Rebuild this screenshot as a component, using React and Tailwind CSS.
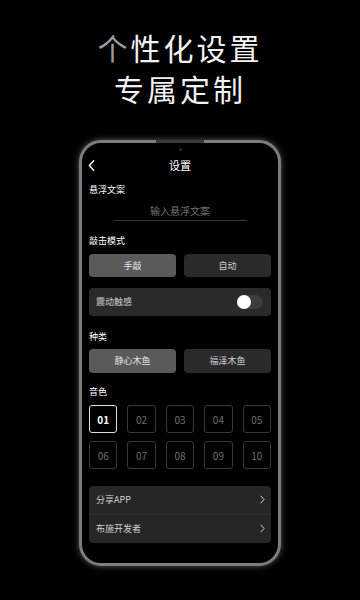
import React, { useState } from "react";

const font = { fontFamily: '"Noto Sans CJK SC", "Noto Sans", sans-serif' };

const Chevron = ({ className }) => (
  <svg viewBox="0 0 8 14" className={className} fill="none" stroke="currentColor" strokeWidth="1.6" strokeLinecap="round" strokeLinejoin="round">
    <path d="M1.5 1.5 L6.5 7 L1.5 12.5" />
  </svg>
);

const Segment = ({ options, value, onChange }) => (
  <div className="grid grid-cols-2 gap-2 h-full">
    {options.map((o) => (
      <button
        key={o}
        onClick={() => onChange(o)}
        className={`h-full rounded-[4px] text-[9px] ${value === o ? "bg-[#5a5a5a] text-[#e5e5e5]" : "bg-[#2a2a2a] text-[#cfcfcf]"}`}
      >
        {o}
      </button>
    ))}
  </div>
);

export default function App() {
  const [mode, setMode] = useState("手敲");
  const [kind, setKind] = useState("静心木鱼");
  const [tone, setTone] = useState("01");
  const [vibrate, setVibrate] = useState(false);
  const tones = ["01", "02", "03", "04", "05", "06", "07", "08", "09", "10"];

  return (
    <div className="w-[360px] h-[600px] bg-black overflow-hidden flex flex-col items-center" style={font}>
      {/* Headline */}
      <div className="pt-[27px] text-center leading-[41px] text-[30px] tracking-[3px] text-[#f2f2f2]">
        <div>
          <span className="text-[#9c9c9c]">个</span>性化设置
        </div>
        <div>专属定制</div>
      </div>

      {/* Phone */}
      <div className="relative mt-[31px] w-[202px] h-[426px] rounded-[22px] border-[3px] border-[#7c7c7c] bg-black shadow-[0_0_6px_rgba(255,255,255,0.35)] px-[7px]">
        <div className="absolute -top-[3px] left-[74px] w-[48px] h-[3px] bg-[#3a3a3a]" />
        <div className="absolute top-[5px] left-[97px] w-[3px] h-[3px] rounded-full bg-[#2e2e2e]" />

        {/* Header */}
        <div className="relative mt-[10px] h-6 flex items-center justify-center">
          <Chevron className="absolute left-[-1px] w-[7px] h-[13px] text-white rotate-180" />
          <span className="text-[11px] text-white">设置</span>
        </div>

        <div className="mt-[7px] text-[9px] leading-[12px] text-white">悬浮文案</div>
        <div className="mt-[8px] text-center text-[10px] leading-[14px] text-[#6f6f6f]">输入悬浮文案</div>
        <div className="mt-[2px] mx-auto w-[133px] border-b border-[#333]" />

        <div className="mt-[14px] text-[9px] leading-[12px] text-white">敲击模式</div>
        <div className="mt-[7px] h-[23px]">
          <Segment options={["手敲", "自动"]} value={mode} onChange={setMode} />
        </div>

        <div className="mt-[11px] h-[28px] rounded-[4px] bg-[#2a2a2a] flex items-center justify-between pl-[7px] pr-[8px]">
          <span className="text-[9px] text-[#d0d0d0]">震动触感</span>
          <button
            onClick={() => setVibrate(!vibrate)}
            className={`relative w-[26px] h-[14px] rounded-full ${vibrate ? "bg-[#8a8a8a]" : "bg-[#3c3c3c]"}`}
          >
            <span className={`absolute top-0 w-[14px] h-[14px] rounded-full bg-white ${vibrate ? "left-[12px]" : "left-0"}`} />
          </button>
        </div>

        <div className="mt-[15px] text-[9px] leading-[12px] text-white">种类</div>
        <div className="mt-[6px] h-[24px]">
          <Segment options={["静心木鱼", "福泽木鱼"]} value={kind} onChange={setKind} />
        </div>

        <div className="mt-[13px] text-[9px] leading-[12px] text-white">音色</div>
        <div className="mt-[7px] grid grid-cols-5 gap-x-[10px] gap-y-[8px]">
          {tones.map((t) => (
            <button
              key={t}
              onClick={() => setTone(t)}
              className={`h-[28px] rounded-[3px] flex items-center justify-center text-[10px] ${
                tone === t ? "border-[1.5px] border-[#e0e0e0] text-white font-bold" : "border border-[#383838] text-[#6e6e6e]"
              }`}
            >
              {t}
            </button>
          ))}
        </div>

        <div className="mt-[17px] rounded-[4px] bg-[#262626]">
          {["分享APP", "布施开发者"].map((label, i) => (
            <div
              key={label}
              className={`h-[28.5px] flex items-center justify-between pl-[7px] pr-[6px] ${i === 0 ? "border-b border-[#303030]" : ""}`}
            >
              <span className="text-[9px] text-[#cfcfcf]">{label}</span>
              <Chevron className="w-[5px] h-[9px] text-[#cfcfcf]" />
            </div>
          ))}
        </div>
      </div>
    </div>
  );
}
